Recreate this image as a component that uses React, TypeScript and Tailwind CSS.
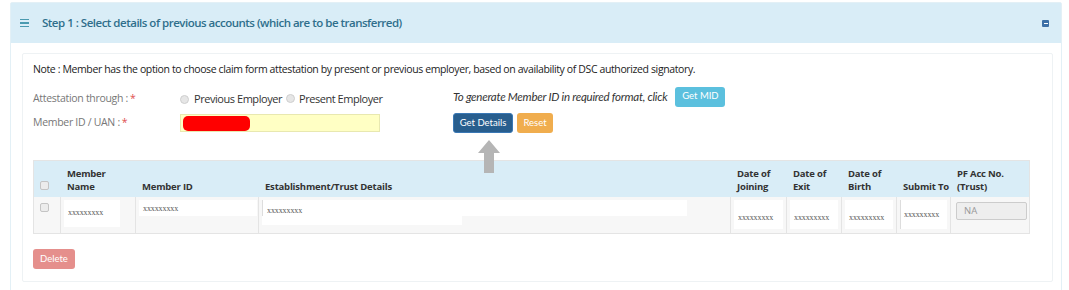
import React from "react";

const cols = [
  { label: ["", ""], w: "w-[27px]" },
  { label: ["Member", "Name"], w: "w-[75px]" },
  { label: ["", "Member ID"], w: "w-[123px]" },
  { label: ["", "Establishment/Trust Details"], w: "w-[472px]" },
  { label: ["Date of", "Joining"], w: "w-[56px]" },
  { label: ["Date of", "Exit"], w: "w-[55px]" },
  { label: ["Date of", "Birth"], w: "w-[55px]" },
  { label: ["", "Submit To"], w: "w-[54px]" },
  { label: ["PF Acc No.", "(Trust)"], w: "w-[80px]" },
];

function Check() {
  return <span className="block w-[9px] h-[9px] rounded-[2px] border border-[#c4c4c4] bg-[#ececec]" />;
}

function Radio() {
  return <span className="inline-block w-[9px] h-[9px] rounded-full border border-[#cfcfcf] bg-[#e6e6e6]" />;
}

function Xs() {
  return (
    <span className="block leading-none text-[8px] tracking-[-0.1px] text-[#555] [font-family:'Liberation_Serif',serif]">
      xxxxxxxxx
    </span>
  );
}

export default function App() {
  return (
    <div className="w-[1069px] h-[290px] overflow-hidden bg-white pl-[10px] pt-[2px] [font-family:'Open_Sans',sans-serif]">
      <div className="w-[1052px] border border-[#e3f0f6] rounded-t-[2px]">
        {/* Header */}
        <div className="h-[40px] bg-[#d9edf7] flex items-center pl-[9px] pr-[12px]">
          <span className="flex flex-col gap-[2px] w-[9px] mr-[13px]">
            <span className="block h-[1.5px] bg-[#4a9ab0]" />
            <span className="block h-[1.5px] bg-[#4a9ab0]" />
            <span className="block h-[1.5px] bg-[#4a9ab0]" />
          </span>
          <span className="text-[11.5px] font-semibold text-[#2f6f8c] tracking-[-0.5px]">
            Step 1 : Select details of previous accounts (which are to be transferred)
          </span>
          <span className="ml-auto w-[7px] h-[7px] rounded-[1px] bg-[#3c6fa6] flex items-center justify-center">
            <span className="block w-[4px] h-[1px] bg-white" />
          </span>
        </div>

        {/* Body */}
        <div className="pl-[11px] pt-[10px] pr-[8px] pb-[10px]">
          <div className="relative border border-[#eef2f4] rounded-[2px] pl-[10px] pr-[21px] pt-[7px] pb-[12px]">
            <p className="text-[10.5px] text-[#222] tracking-[-0.38px] leading-[16px]">
              Note : Member has the option to choose claim form attestation by present or previous employer, based on availability of DSC authorized signatory.
            </p>

            <div className="flex mt-[6px]">
              <div className="w-[147px] flex flex-col text-[10.5px] text-[#777] tracking-[-0.3px]">
                <div className="h-[27px] flex items-center pt-[5px]">
                  Attestation through : <span className="text-[#e05050] ml-[2px]">*</span>
                </div>
                <div className="h-[26px] flex items-center">
                  Member ID / UAN : <span className="text-[#e05050] ml-[2px]">*</span>
                </div>
              </div>

              <div className="w-[273px] flex flex-col">
                <div className="h-[27px] flex items-center pt-[5px] text-[11px] text-[#333] tracking-[-0.45px]">
                  <Radio />
                  <span className="ml-[5px]">Previous Employer</span>
                  <span className="ml-[4px]"><Radio /></span>
                  <span className="ml-[4px]">Present Employer</span>
                </div>
                <div className="h-[26px] flex items-center">
                  <div className="w-[200px] h-[18px] bg-[#ffffc4] border border-[#e8e8b0] flex items-center pl-[2px]">
                    <span className="block w-[67px] h-[15px] rounded-[5px] bg-[#ff0000]" />
                  </div>
                </div>
              </div>

              <div className="flex flex-col">
                <div className="h-[27px] flex items-center">
                  <span className="italic text-[11.5px] text-[#333] tracking-[-0.25px] [font-family:Lato,sans-serif]">
                    To generate Member ID in required format, click
                  </span>
                  <span className="ml-[8px] h-[20px] w-[50px] justify-center rounded-[3px] bg-[#5bc0de] text-white text-[9.5px] flex items-center [font-family:Lato,sans-serif]">
                    Get MID
                  </span>
                </div>
                <div className="h-[26px] flex items-center gap-[4px]">
                  <span className="h-[20px] w-[60px] rounded-[3px] bg-[#285e8e] border border-[#3a78b5] text-white text-[9.5px] flex items-center justify-center [font-family:Lato,sans-serif]">
                    Get Details
                  </span>
                  <span className="h-[20px] w-[36px] rounded-[3px] bg-[#f0ad4e] text-white text-[9.5px] flex items-center justify-center [font-family:Lato,sans-serif]">
                    Reset
                  </span>
                </div>
              </div>
            </div>

            {/* Table */}
            <div className="mt-[24px] w-[997px] border border-[#e4e4e4]">
              <div className="flex bg-[#d9edf7] h-[36px]">
                {cols.map((c, i) => (
                  <div key={i} className={`${c.w} shrink-0 flex flex-col justify-end pb-[4px] pl-[6px] text-[9.5px] font-bold text-[#333] leading-[13px] tracking-[-0.2px]`}>
                    {i === 0 ? (
                      <div className="pb-[3px]"><Check /></div>
                    ) : (
                      <>
                        <span>{c.label[0]}</span>
                        <span>{c.label[1]}</span>
                      </>
                    )}
                  </div>
                ))}
              </div>
              <div className="flex h-[36px] bg-[#f7f7f7]">
                <div className="w-[27px] shrink-0 pl-[6px] pt-[6px] border-r border-[#e4e4e4]"><Check /></div>
                <div className="w-[75px] shrink-0 p-[3px] border-r border-[#e4e4e4]">
                  <div className="bg-white h-[27px] w-[56px] pl-[4px] pt-[9px]"><Xs /></div>
                </div>
                <div className="w-[123px] shrink-0 p-[3px] border-r border-[#e4e4e4]">
                  <div className="bg-white h-[16px] w-[118px] pl-[4px] pt-[5px]"><Xs /></div>
                </div>
                <div className="w-[472px] shrink-0 p-[3px] border-r border-[#e4e4e4]">
                  <div className="bg-white h-[16px] w-[425px] pl-[4px] pt-[7px] border-l border-[#ddd]"><Xs /></div>
                  <div className="bg-white h-[9px] w-[200px]" />
                </div>
                {["w-[56px]", "w-[55px]", "w-[55px]"].map((w, i) => (
                  <div key={i} className={`${w} shrink-0 p-[3px] border-r border-[#e4e4e4]`}>
                    <div className="bg-white h-[29px] pl-[4px] pt-[14px]"><Xs /></div>
                  </div>
                ))}
                <div className="w-[54px] shrink-0 p-[3px] border-r border-[#e4e4e4]">
                  <div className="bg-white h-[29px] pl-[3px] pt-[11px] border-l border-[#ddd]"><Xs /></div>
                </div>
                <div className="w-[80px] shrink-0 pl-[5px] pt-[5px]">
                  <div className="w-[71px] h-[18px] bg-[#eee] border border-[#ccc] rounded-[2px] text-[9.5px] text-[#999] pl-[7px] flex items-center">
                    NA
                  </div>
                </div>
              </div>
            </div>

            <div className="mt-[10px]">
              <span className="inline-flex h-[20px] w-[42px] rounded-[3px] bg-[#e58f8c] text-white text-[9.5px] items-center justify-center [font-family:Lato,sans-serif]">
                Delete
              </span>
            </div>

            {/* pointer arrow */}
            <svg className="absolute left-[455px] top-[86px]" width="22" height="33" viewBox="0 0 22 33">
              <polygon points="11,0 22,13 16,13 16,33 6,33 6,13 0,13" fill="#b5b5b5" />
            </svg>
          </div>
        </div>
      </div>
    </div>
  );
}
